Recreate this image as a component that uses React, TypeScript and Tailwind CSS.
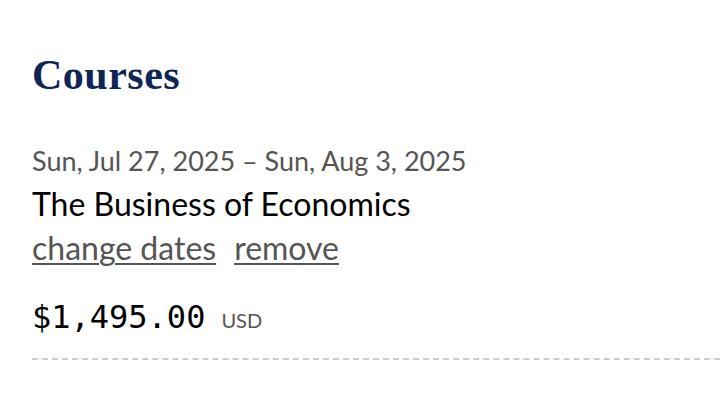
const App = () => {
  return (
    <div className="min-h-screen bg-white pl-8 pt-[50px] overflow-hidden">
      <h2 className="font-['Liberation_Serif',serif] font-bold text-[42px] leading-[50px] tracking-[0.5px] text-[#0f2557]">
        Courses
      </h2>
      <div className="mt-[40px] font-['Lato',sans-serif]">
        <div className="text-[27px] leading-[42px] text-[#555555]">
          Sun, Jul 27, 2025 – Sun, Aug 3, 2025
        </div>
        <div className="text-[32px] leading-[44px] text-black">
          The Business of Economics
        </div>
        <div className="flex gap-[18px] text-[32px] leading-[44px] text-[#555555]">
          <a href="#" className="underline decoration-2 underline-offset-[3px]">
            change dates
          </a>
          <a href="#" className="underline decoration-2 underline-offset-[3px]">
            remove
          </a>
        </div>
      </div>
      <div className="mt-[25px] flex items-baseline gap-4">
        <span className="font-['DejaVu_Sans_Mono',monospace] text-[32px] leading-[44px] text-black">
          $1,495.00
        </span>
        <span className="font-['Lato',sans-serif] text-[20px] text-[#555555]">USD</span>
      </div>
      <div className="mt-[19px] border-t-2 border-dashed border-[#cccccc]"></div>
    </div>
  );
};

export default App;
